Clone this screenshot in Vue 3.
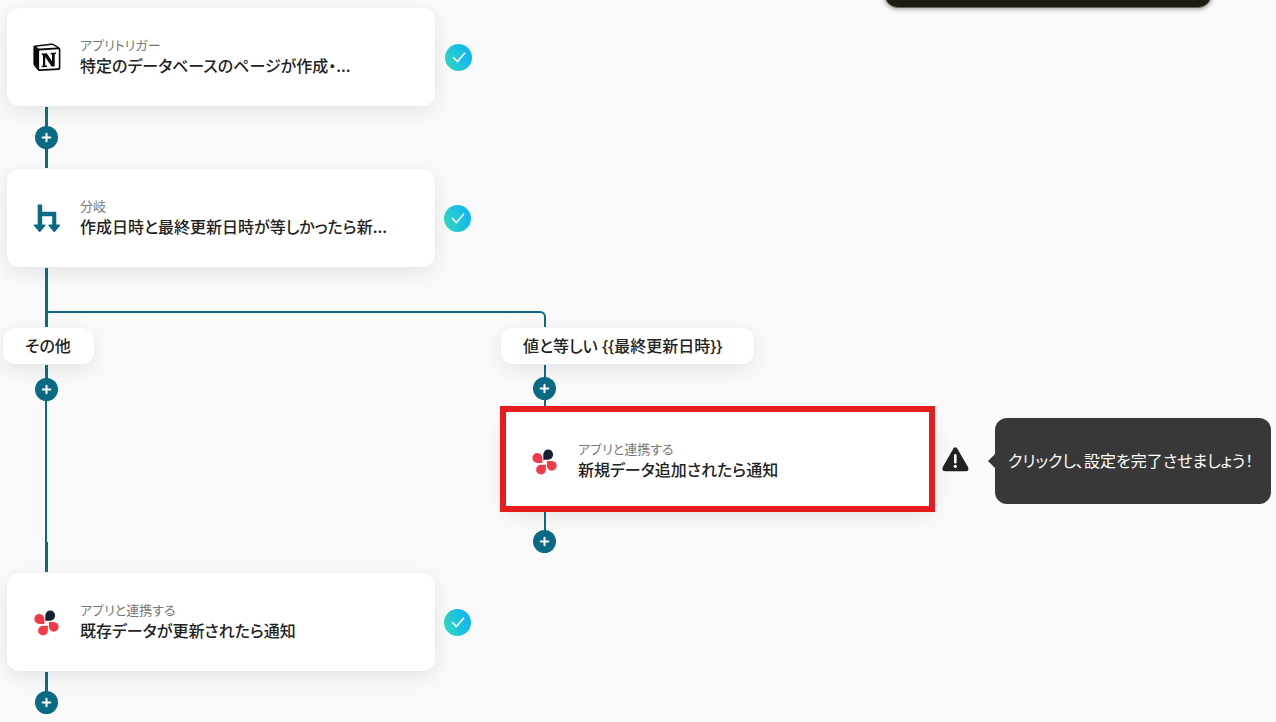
<script setup>
const at = (n) => ({
  left: n.x + 'px',
  top: n.y + 'px',
  width: n.w ? n.w + 'px' : undefined,
  height: n.h ? n.h + 'px' : undefined,
})

const steps = [
  { id: 1, x: 7, y: 8, icon: 'notion', kind: 'アプリトリガー', title: '特定のデータベースのページが作成・...' },
  { id: 2, x: 7, y: 169, icon: 'branch', kind: '分岐', title: '作成日時と最終更新日時が等しかったら新...' },
  { id: 3, x: 505, y: 412, icon: 'petals', kind: 'アプリと連携する', title: '新規データ追加されたら通知' },
  { id: 4, x: 7, y: 573, icon: 'petals', kind: 'アプリと連携する', title: '既存データが更新されたら通知' },
]

const branches = [
  { x: 3, y: 328, w: 91, text: 'その他' },
  { x: 501, y: 328, w: 253, text: '値と等しい {{最終更新日時}}' },
]

const adders = [
  { x: 35, y: 126 },
  { x: 35, y: 378 },
  { x: 533, y: 377 },
  { x: 533, y: 530 },
  { x: 35, y: 691 },
]

const checks = [
  { x: 445, y: 44 },
  { x: 444, y: 205 },
  { x: 444, y: 609 },
]

const links = [
  { x: 45, y: 107, w: 3, h: 61 },
  { x: 45, y: 268, w: 3, h: 59 },
  { x: 45, y: 365, w: 3, h: 20 },
  { x: 45, y: 385, w: 2, h: 157 },
  { x: 45, y: 542, w: 3, h: 30 },
  { x: 45, y: 672, w: 3, h: 24 },
  { x: 544, y: 365, w: 2, h: 42 },
  { x: 544, y: 512, w: 2, h: 24 },
]
</script>

<template>
  <main class="canvas">
    <div class="panel"></div>

    <button v-for="s in steps" :key="s.id" type="button" class="step" :style="at(s)">
      <svg v-if="s.icon === 'notion'" class="step-icon" viewBox="0 0 28 28" aria-hidden="true">
        <path d="M1.5 2.6 L18 .6 Q20 .4 21.2 1.2 L26 4.2 Q27.4 5 27.4 6.4 V25 Q27.4 26.8 25.6 27 L7 28 Q5.6 28.1 4.8 27.2 L1 22.4 Q.4 21.6 .4 20.6 V4 Q.4 2.8 1.5 2.6Z" fill="#0b0b0b" />
        <path d="M3.4 3.7 L18.6 2.1 Q19.8 2 20.6 2.5 L24 4.5 L7.2 5.6 Q6 5.7 5.2 5.2Z" fill="#fff" />
        <path d="M6.8 7.4 L25 6.3 Q25.8 6.3 25.8 7.1 V24.3 Q25.8 25.1 25 25.2 L6.9 26.3 Q6.1 26.3 6.1 25.5 V8.2 Q6.1 7.5 6.8 7.4Z" fill="#fff" />
        <path d="M8.7 10.6 L13.8 10.3 L19 18.2 V11.5 L17.6 11.1 V10 L23 9.6 V10.7 L21.7 11.3 V23 Q20 24 18.4 23.2 L12.2 14 V22.3 L14 22.8 V23.9 L8.7 24.2 V23.1 L10 22.5 V12.2 L8.7 11.8Z" fill="#0b0b0b" />
      </svg>
      <svg v-else-if="s.icon === 'branch'" class="step-icon" viewBox="0 0 28 28" aria-hidden="true">
        <path d="M5.2 .5 H8.2 Q9.2 .5 9.2 1.5 V7.8 H22 Q23.3 7.8 23.3 9 V20.5 H26.4 Q27.8 20.5 26.9 21.7 L22.2 27.6 Q21.3 28.6 20.4 27.6 L15.6 21.7 Q14.7 20.5 16.1 20.5 H19.2 V12.3 H9.2 V20.5 H11.8 Q13.2 20.5 12.3 21.7 L7.5 27.6 Q6.7 28.6 5.9 27.6 L1 21.7 Q.1 20.5 1.5 20.5 H4.7 V1 Q4.7 .5 5.2 .5Z" fill="#0a6a84" />
      </svg>
      <svg v-else class="step-icon" viewBox="0 0 28 28" aria-hidden="true">
        <path d="M12.3 12.7 V7.6 A4.9 5.1 0 1 1 17.2 12.7Z" fill="#142131" />
        <path d="M11.4 15.9 H6.5 A5 5 0 1 1 11.4 11Z" fill="#f33a4b" />
        <path d="M15.9 13.9 H20.9 A4.9 4.9 0 1 1 15.9 18.8Z" fill="#f33a4b" />
        <path d="M14.9 17.7 V22.5 A4.9 4.9 0 1 1 10 17.7Z" fill="#f33a4b" />
      </svg>
      <span class="step-text">
        <span class="kind">{{ s.kind }}</span>
        <span class="title">{{ s.title }}</span>
      </span>
    </button>

    <div v-for="b in branches" :key="b.text" class="branch" :style="at(b)">{{ b.text }}</div>

    <div v-for="l in links" :key="l.x + '-' + l.y" class="link" :style="at(l)"></div>
    <div class="elbow"></div>

    <button v-for="a in adders" :key="a.x + '-' + a.y" type="button" class="adder" :style="at(a)" aria-label="追加">
      <svg viewBox="0 0 23 23" aria-hidden="true">
        <path d="M11.5 7.7 V15.3 M7.7 11.5 H15.3" stroke="#fff" stroke-width="2" stroke-linecap="round" />
      </svg>
    </button>

    <svg v-for="c in checks" :key="c.y" class="check" :style="at(c)" viewBox="0 0 27 27" aria-hidden="true">
      <defs>
        <linearGradient id="done" x1="0" y1=".75" x2="1" y2=".35">
          <stop offset="0" stop-color="#2fd8bd" />
          <stop offset=".85" stop-color="#12b8ee" />
        </linearGradient>
      </defs>
      <circle cx="13.5" cy="13.5" r="13.5" fill="url(#done)" />
      <path d="M8.5 13.5 L12.4 17.6 L19.6 9.2" fill="none" stroke="#fff" stroke-width="1.6" stroke-linecap="round" stroke-linejoin="round" />
    </svg>

    <div class="highlight"></div>

    <svg class="warning" viewBox="0 0 27 25" aria-hidden="true">
      <path d="M11.4 1.5 Q13.3 -1.2 15.2 1.5 L26 20 Q27.4 24 23.6 24.2 H3.2 Q-.6 24 .8 20Z" fill="#222" />
      <path d="M13.3 8.2 V15.2" stroke="#fff" stroke-width="2.6" stroke-linecap="round" />
      <circle cx="13.3" cy="19.3" r="1.6" fill="#fff" />
    </svg>

    <div class="tip" role="tooltip">クリックし、設定を完了させましょう！</div>
  </main>
</template>

<style>
body {
  background: #fafafa;
}
</style>

<style scoped>
.canvas {
  position: relative;
  min-height: 100vh;
  overflow: hidden;
  background: #fafafa;
  color: #222;
  font-family: "Noto Sans CJK JP", sans-serif;
  font-feature-settings: "palt";
}
.panel {
  position: absolute;
  left: 884px;
  top: -52px;
  width: 328px;
  height: 60px;
  box-sizing: border-box;
  border: 1px solid #6a6459;
  border-radius: 14px;
  background: #1f1b13;
  box-shadow: 0 1px 5px rgba(0, 0, 0, 0.4);
}
.step {
  position: absolute;
  display: flex;
  align-items: center;
  gap: 19px;
  box-sizing: border-box;
  width: 428px;
  height: 98px;
  padding: 0 26px;
  border: 0;
  border-radius: 12px;
  background: #fff;
  box-shadow: 0 0 0 1px rgba(0, 0, 0, 0.01), 0 6px 24px rgba(0, 0, 0, 0.09);
  color: inherit;
  font-family: inherit;
  font-feature-settings: inherit;
  text-align: left;
}
.step-icon {
  flex: none;
  width: 28px;
  height: 28px;
}
.step-text {
  display: flex;
  flex-direction: column;
  padding-bottom: 2px;
  white-space: nowrap;
}
.kind {
  font-size: 13px;
  line-height: 18px;
  color: #777;
}
.title {
  font-size: 16px;
  line-height: 22px;
  font-weight: 500;
}
.branch {
  position: absolute;
  box-sizing: border-box;
  padding: 6px 22px;
  border-radius: 12px;
  background: #fff;
  box-shadow: 0 0 0 1px rgba(0, 0, 0, 0.01), 0 6px 24px rgba(0, 0, 0, 0.09);
  font-family: "Noto Sans", "Noto Sans CJK JP", sans-serif;
  font-size: 16px;
  line-height: 24px;
  font-weight: 500;
  white-space: nowrap;
}
.link {
  position: absolute;
  background: #0a6a84;
}
.elbow {
  position: absolute;
  left: 47px;
  top: 311px;
  width: 499px;
  height: 16px;
  box-sizing: border-box;
  border-top: 2px solid #0a6a84;
  border-right: 2px solid #0a6a84;
  border-top-right-radius: 6px;
}
.adder {
  position: absolute;
  width: 23px;
  height: 23px;
  padding: 0;
  border: 0;
  border-radius: 50%;
  background: #0a6a84;
}
.adder svg {
  display: block;
}
.check {
  position: absolute;
  width: 27px;
  height: 27px;
}
.highlight {
  position: absolute;
  left: 500px;
  top: 406px;
  width: 435px;
  height: 106px;
  box-sizing: border-box;
  border: 6px solid #e71c1c;
  pointer-events: none;
}
.warning {
  position: absolute;
  left: 942px;
  top: 447px;
  width: 27px;
  height: 25px;
}
.tip {
  position: absolute;
  left: 995px;
  top: 418px;
  min-width: 250px;
  padding: 30px 13px 32px;
  border-radius: 12px;
  background: #383838;
  color: #fff;
  font-size: 16px;
  line-height: 24px;
  white-space: nowrap;
}
.tip::before {
  content: "";
  position: absolute;
  left: -7px;
  top: 36px;
  border: 7px solid transparent;
  border-left: 0;
  border-right-color: #383838;
}
</style>
